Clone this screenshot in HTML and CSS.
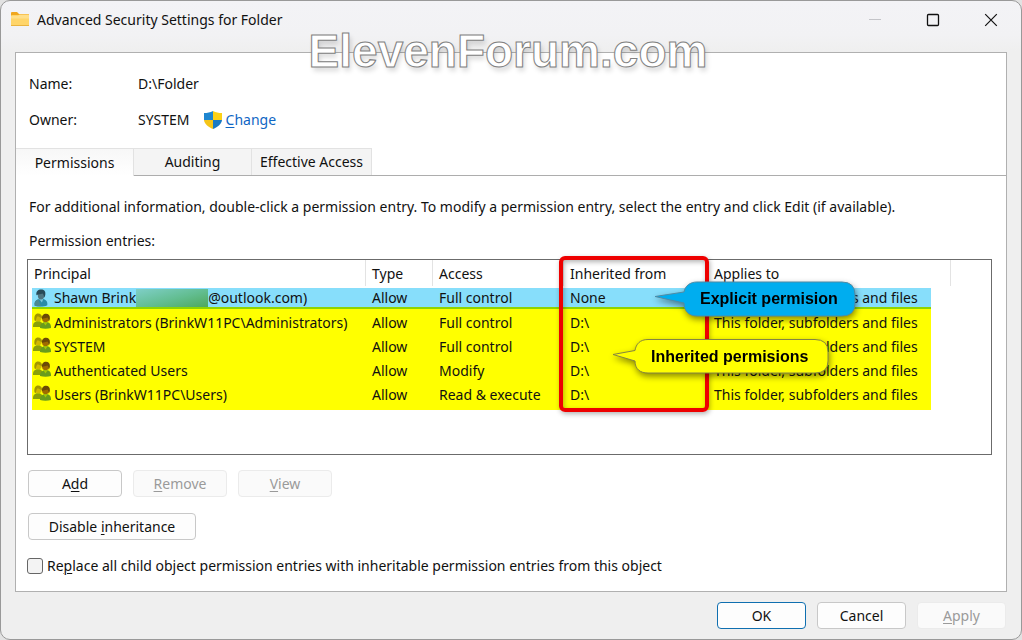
FILE: index.html
```html
<!DOCTYPE html>
<html lang="en">
<head>
    <meta charset="UTF-8">
    <meta name="viewport" content="width=device-width, initial-scale=1.0">
    <title>Advanced Security Settings for Folder</title>
    <link rel="stylesheet" href="styles.css">
</head>
<body>
    <!-- Shared icons for the principal column -->
    <svg class="icon-defs" aria-hidden="true">
        <symbol id="icon-user" viewBox="0 0 16 20">
            <path d="M1 18.500c-.8-3.500.4-5.500 4-7l6-.5c3 1 4.500 3.500 4 7-4 2-10 2-14 .5z" fill="#2a8ba6"/>
            <path d="M1 18.500c-.8-3.500.4-5.500 4-7l3 7.800z" fill="#4b8a91"/>
            <path d="M6 11l3 4 1.500-4z" fill="#7cc6dc"/>
            <ellipse cx="8" cy="6.800" rx="3.600" ry="5" fill="#4e7480"/>
            <path d="M3 7C2 2.500 5 .5 8 .5c3.500 0 5.300 2 4.800 5.500-.1 1.800-.8 3-1.600 3.800.3-2.300-.2-4-1.600-4.800C7.500 6.300 5.500 5.500 3 7z" fill="#284a58"/>
        </symbol>
        <symbol id="icon-group" viewBox="0 0 18 16">
            <path d="M0 14c-.2-3.500 1.200-5 3.500-5.800h3C9 9 10 10.500 10 14z" fill="#8a9f0a"/>
            <circle cx="5.300" cy="5" r="3.300" fill="#d0b800"/>
            <path d="M1.500 7.500C.8 3 2.500.6 5 .6s4.300 1.600 4 4.600C7.500 4.500 6 4 4.800 3.300 4 4 3 5 3 8z" fill="#a39600"/>
            <path d="M7 15c-.2-3.500 1.700-5 4-5.700h3.500c2.600.6 3.700 2.700 3.500 5.700-3.500 1-7.500 1-11 0z" fill="#689c1c"/>
            <path d="M10.500 9.500l2 3 2-3z" fill="#a8c800"/>
            <circle cx="12.500" cy="5.700" r="3.400" fill="#a06c00"/>
            <path d="M9 6C8.700 2.300 10.500.8 13 .8s4.200 1.700 3.900 4.800c-.2 1.500-.7 2.300-1.300 2.900 0-2-.3-3.500-1.300-4.100C12.500 5.300 10.700 5 9 6z" fill="#6b4a06"/>
        </symbol>
    </svg>

    <div class="window">
        <header class="titlebar">
            <svg class="folder-icon" width="20" height="18" viewBox="0 0 20 18" aria-hidden="true">
                <path d="M1 4V2.200C1 1.500 1.500 1 2.200 1h4.800l2 2H18c.6 0 1 .4 1 1v3H1z" fill="#f0a71f"/>
                <rect x="1" y="4" width="18" height="11" rx="1" fill="#ffd56a"/>
                <path d="M1 5h7l1.500-1.500H18c.6 0 1 .4 1 1v3H1z" fill="#ffdf8a"/>
                <rect x="1" y="14" width="18" height="1" fill="#eab440"/>
            </svg>
            <h1>Advanced Security Settings for Folder</h1>
            <div class="caption-buttons">
                <button type="button" aria-label="Minimize" disabled>
                    <svg width="14" height="14" viewBox="0 0 14 14"><path d="M1 6.500h12" stroke="#c3c4c8"/></svg>
                </button>
                <button type="button" aria-label="Maximize">
                    <svg width="14" height="14" viewBox="0 0 14 14"><rect x="1.500" y="1.500" width="11" height="11" rx="1" fill="none" stroke="#111" stroke-width="1.300"/></svg>
                </button>
                <button type="button" aria-label="Close">
                    <svg width="14" height="14" viewBox="0 0 14 14"><path d="M1.200 1.200l11.600 11.600M12.800 1.200L1.200 12.800" stroke="#111" stroke-width="1.200"/></svg>
                </button>
            </div>
        </header>

        <main class="panel">
            <div class="details">
                <span>Name:</span>
                <span>D:\Folder</span>
                <span>Owner:</span>
                <span class="owner">SYSTEM
                    <svg width="18" height="18" viewBox="0 0 18 18" aria-hidden="true">
                        <path d="M9 0v9H0V2c3.500 0 6-.5 9-2z" fill="#1e86d0"/>
                        <path d="M9 0v9h9V2c-3.500 0-6-.5-9-2z" fill="#fcd116"/>
                        <path d="M0 9h9v9C4 16 .5 13 0 9z" fill="#f5c518"/>
                        <path d="M18 9H9v9c5-2 8.500-5 9-9z" fill="#1a7ac4"/>
                    </svg>
                    <a href="#"><u>C</u>hange</a>
                </span>
            </div>

            <div class="tabs" role="tablist">
                <button type="button" class="tab active" role="tab" aria-selected="true">Permissions</button>
                <button type="button" class="tab" role="tab" aria-selected="false">Auditing</button>
                <button type="button" class="tab" role="tab" aria-selected="false">Effective Access</button>
            </div>

            <div class="tab-content">
                <p>For additional information, double-click a permission entry. To modify a permission entry, select the entry and click Edit (if available).</p>
                <p class="list-label" id="entries">Permission entries:</p>

                <div class="list">
                    <table aria-labelledby="entries">
                        <colgroup>
                            <col class="col-principal">
                            <col class="col-type">
                            <col class="col-access">
                            <col class="col-inherited">
                            <col class="col-applies">
                            <col class="col-rest">
                        </colgroup>
                        <thead>
                            <tr>
                                <th>Principal</th>
                                <th>Type</th>
                                <th>Access</th>
                                <th>Inherited from</th>
                                <th colspan="2">Applies to</th>
                            </tr>
                        </thead>
                        <tbody>
                            <tr class="explicit">
                                <td><div class="principal"><svg class="user"><use href="#icon-user"/></svg>Shawn Brink<span class="redacted"></span>@outlook.com)</div></td>
                                <td>Allow</td>
                                <td>Full control</td>
                                <td>None</td>
                                <td>This folder, subfolders and files</td>
                            </tr>
                            <tr class="inherited">
                                <td><div class="principal"><svg><use href="#icon-group"/></svg>Administrators (BrinkW11PC\Administrators)</div></td>
                                <td>Allow</td>
                                <td>Full control</td>
                                <td>D:\</td>
                                <td>This folder, subfolders and files</td>
                            </tr>
                            <tr class="inherited">
                                <td><div class="principal"><svg><use href="#icon-group"/></svg>SYSTEM</div></td>
                                <td>Allow</td>
                                <td>Full control</td>
                                <td>D:\</td>
                                <td>This folder, subfolders and files</td>
                            </tr>
                            <tr class="inherited">
                                <td><div class="principal"><svg><use href="#icon-group"/></svg>Authenticated Users</div></td>
                                <td>Allow</td>
                                <td>Modify</td>
                                <td>D:\</td>
                                <td>This folder, subfolders and files</td>
                            </tr>
                            <tr class="inherited">
                                <td><div class="principal"><svg><use href="#icon-group"/></svg>Users (BrinkW11PC\Users)</div></td>
                                <td>Allow</td>
                                <td>Read &amp; execute</td>
                                <td>D:\</td>
                                <td>This folder, subfolders and files</td>
                            </tr>
                        </tbody>
                    </table>

                    <div class="marker"></div>
                    <div class="callout callout-explicit">
                        <svg width="202" height="36" viewBox="0 0 202 36" aria-hidden="true">
                            <path d="M1 15.500L30 11C31 5 36 1 43 1H188Q201 1 201 14V22Q201 35 188 35H43C35 35 30 30 30 22Z" fill="#00adef" stroke="#4e8ba5"/>
                        </svg>
                        <span>Explicit permision</span>
                    </div>
                    <div class="callout callout-inherited">
                        <svg width="217" height="35" viewBox="0 0 217 35" aria-hidden="true">
                            <path d="M1 15.500L23 11.500C24 5 28 .5 36 .5H203Q216 .5 216 13V22Q216 34 203 34H36C28 34 23 30 23 22Z" fill="#ffff00" stroke="#858540"/>
                        </svg>
                        <span>Inherited permisions</span>
                    </div>
                </div>

                <div class="actions">
                    <button type="button" class="btn">A<u>d</u>d</button>
                    <button type="button" class="btn" disabled><u>R</u>emove</button>
                    <button type="button" class="btn" disabled><u>V</u>iew</button>
                </div>
                <button type="button" class="btn btn-wide">Disable <u>i</u>nheritance</button>
                <label class="check">
                    <input type="checkbox">
                    <span>Re<u>p</u>lace all child object permission entries with inheritable permission entries from this object</span>
                </label>
            </div>
        </main>

        <footer class="footer">
            <button type="button" class="btn btn-default">OK</button>
            <button type="button" class="btn">Cancel</button>
            <button type="button" class="btn" disabled><u>A</u>pply</button>
        </footer>

        <div class="watermark">ElevenForum.com</div>
    </div>
</body>
</html>
```
FILE: styles.css
```css
* {
    margin: 0;
    padding: 0;
    box-sizing: border-box;
}

body {
    font-family: 'Segoe UI', 'Noto Sans', 'Open Sans', sans-serif;
    font-size: 14px;
    line-height: 20px;
    color: #111;
    background: #e2e2e2;
}

button,
input {
    font: inherit;
    color: inherit;
}

.icon-defs {
    position: absolute;
    width: 0;
    height: 0;
}

.window {
    position: relative;
    display: flex;
    flex-direction: column;
    min-height: 100vh;
    border: 1px solid #999;
    border-radius: 10px;
    background: linear-gradient(#f3f3f6, #f2f2f4 34px, #efefef 50px);
}

/* Title bar */
.titlebar {
    display: flex;
    align-items: center;
    height: 37px;
    margin-bottom: 14px;
    padding-left: 9px;
}

.titlebar h1 {
    flex: 1;
    margin-left: 7px;
    font-size: 14px;
    font-weight: normal;
}

.caption-buttons {
    display: flex;
    padding-right: 1px;
}

.caption-buttons button {
    display: flex;
    align-items: center;
    justify-content: center;
    width: 58px;
    height: 36px;
    border: none;
    background: none;
}

/* Main panel */
.panel {
    flex: 1;
    margin: 0 14px;
    border: 1px solid #b0b0b0;
    background: #fff;
}

.details {
    display: grid;
    grid-template-columns: 109px 1fr;
    row-gap: 16px;
    padding: 21px 13px 18px;
}

.owner {
    display: flex;
    align-items: center;
}

.owner svg {
    margin: 0 4px 0 14px;
}

.owner a {
    color: #0f66c4;
    text-decoration: none;
}

u {
    text-decoration-thickness: 1px;
    text-underline-offset: 2px;
}

.tabs {
    display: flex;
    border-bottom: 1px solid #adadad;
}

.tab {
    width: 118px;
    height: 27px;
    border: 1px solid #e2e2e2;
    border-left: none;
    border-bottom: none;
    background: #f4f4f4;
}

.tab:last-child {
    width: 120px;
}

.tab.active {
    height: 28px;
    margin-bottom: -1px;
    background: linear-gradient(#f7f7f7, #fff);
}

.tab-content {
    padding: 21px 14px 15px 11px;
}

.tab-content p {
    margin-left: 2px;
}

.tab-content .list-label {
    margin: 14px 0 8px 2px;
}

/* Permission list */
.list {
    position: relative;
    min-height: 196px;
    padding-left: 4px;
    border: 1px solid #6b6b6b;
}

table {
    width: 919px;
    table-layout: fixed;
    border-collapse: separate;
    border-spacing: 0;
}

.col-principal { width: 334px; }
.col-type { width: 67px; }
.col-access { width: 131px; }
.col-inherited { width: 144px; }
.col-applies { width: 223px; }
.col-rest { width: 20px; }

th {
    height: 28px;
    padding-left: 6px;
    background: linear-gradient(#e3e3e3, #e3e3e3) right top / 1px 26px no-repeat;
    font-weight: normal;
    text-align: left;
}

th:first-child {
    padding-left: 2px;
}

td {
    height: 24px;
    padding: 4px 0 0 6px;
    white-space: nowrap;
}

td:first-child {
    padding-left: 0;
}

.explicit td {
    height: 21px;
    padding-top: 1px;
    border-bottom: 2px solid #8fd400;
    line-height: 18px;
    background: #87defb;
}

.inherited td {
    background: #ffff00;
}

.inherited:last-child td {
    height: 29px;
    padding-bottom: 5px;
}

.principal {
    display: flex;
    align-items: center;
}

.principal svg {
    width: 18px;
    height: 16px;
    margin: 0 3px 4px 1px;
}

.principal svg.user {
    width: 16px;
    height: 18px;
    margin: 0 5px 0 1px;
}

.redacted {
    width: 72px;
    height: 18px;
    background: linear-gradient(165deg, #7fcfc8, #62bd90 55%, #4ea85c);
}

/* Annotations over the list */
.marker {
    position: absolute;
    top: -4px;
    left: 531px;
    width: 150px;
    height: 156px;
    border: 4px solid #ee0000;
    border-radius: 6px;
    box-shadow: 1px 2px 5px rgba(0, 0, 0, 0.3), inset 1px 2px 5px rgba(0, 0, 0, 0.3);
}

.callout {
    position: absolute;
    display: grid;
    color: #000;
    font: bold 16px 'Liberation Sans', Arial, sans-serif;
    filter: drop-shadow(1px 3px 3px rgba(0, 0, 0, 0.45));
}

.callout svg,
.callout span {
    grid-area: 1 / 1;
}

.callout span {
    align-self: center;
}

.callout-explicit {
    top: 21px;
    left: 626px;
}

.callout-explicit span {
    padding-left: 46px;
}

.callout-inherited {
    top: 79px;
    left: 584px;
}

.callout-inherited span {
    padding-left: 39px;
}

/* Buttons */
.btn {
    height: 27px;
    border: 1px solid #c8c8c8;
    border-radius: 4px;
    background: #fdfdfd;
}

.btn:disabled {
    border-color: #ebebeb;
    color: #9a9a9a;
    background: #fafafa;
}

.actions {
    display: flex;
    gap: 11px;
    margin: 15px 0 16px 1px;
}

.actions .btn {
    width: 94px;
}

.btn-wide {
    display: block;
    width: 168px;
    margin-left: 1px;
}

.check {
    display: flex;
    align-items: center;
    gap: 4px;
    margin-top: 16px;
}

.check input {
    appearance: none;
    width: 16px;
    height: 16px;
    border: 1px solid #666;
    border-radius: 3px;
    background: #f3f3f3;
}

.footer {
    display: flex;
    justify-content: flex-end;
    gap: 11px;
    padding: 10px 15px 10px;
}

.footer .btn {
    width: 89px;
}

.footer .btn-default {
    border-color: #0f6fb0;
}

.watermark {
    position: absolute;
    top: 23px;
    right: 6px;
    left: 0;
    pointer-events: none;
    color: #fff;
    font: bold 46px/54px 'Liberation Sans', Arial, sans-serif;
    text-align: center;
    text-shadow: 2px 4px 5px rgba(0, 0, 0, 0.15);
    -webkit-text-stroke: 1px #808080;
}
```
